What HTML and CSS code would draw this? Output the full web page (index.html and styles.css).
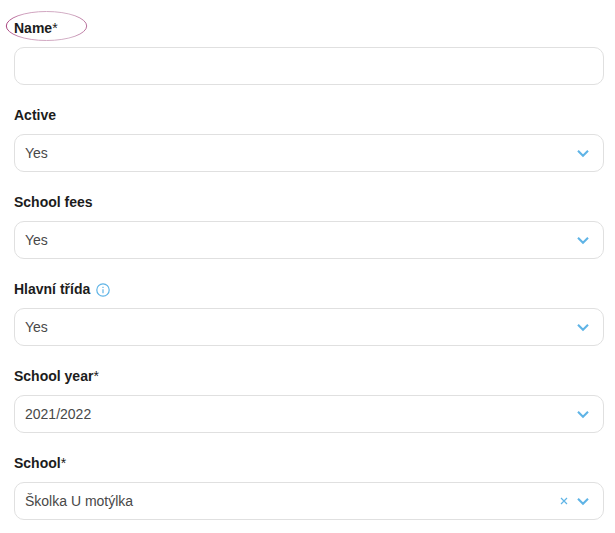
FILE: index.html
```html
<!DOCTYPE html>
<html lang="en">
<head>
<meta charset="utf-8">
<title>Class</title>
<link rel="stylesheet" href="styles.css">
</head>
<body>
<form class="form">
  <div class="field">
    <div class="label">Name<span class="req">*</span>
      <svg class="mark" width="84" height="34" viewBox="0 0 84 34">
        <defs>
          <linearGradient id="ink" x1="0" x2="1" y1="0" y2="0">
            <stop offset="0" stop-color="#a8437f"/>
            <stop offset="0.2" stop-color="#cfa0bd"/>
            <stop offset="0.8" stop-color="#d3b0c6"/>
            <stop offset="1" stop-color="#b8709c"/>
          </linearGradient>
        </defs>
        <ellipse cx="41.5" cy="17" rx="40.2" ry="14.5"/>
      </svg>
    </div>
    <div class="control"></div>
  </div>
  <div class="field">
    <div class="label">Active</div>
    <div class="control"><span class="value">Yes</span><svg class="chevron" viewBox="0 0 12 8"><path d="M1 1.8l5 5 5-5"/></svg></div>
  </div>
  <div class="field">
    <div class="label">School fees</div>
    <div class="control"><span class="value">Yes</span><svg class="chevron" viewBox="0 0 12 8"><path d="M1 1.8l5 5 5-5"/></svg></div>
  </div>
  <div class="field">
    <div class="label">Hlavní třída<svg class="info" viewBox="0 0 14 14"><circle cx="7" cy="7" r="6.2"/><path d="M7 6.2v4M7 3.7v1.3"/></svg></div>
    <div class="control"><span class="value">Yes</span><svg class="chevron" viewBox="0 0 12 8"><path d="M1 1.8l5 5 5-5"/></svg></div>
  </div>
  <div class="field">
    <div class="label">School year<span class="req">*</span></div>
    <div class="control"><span class="value">2021/2022</span><svg class="chevron" viewBox="0 0 12 8"><path d="M1 1.8l5 5 5-5"/></svg></div>
  </div>
  <div class="field">
    <div class="label">School<span class="req">*</span></div>
    <div class="control"><span class="value">Školka U motýlka</span><svg class="clear" viewBox="0 0 8 8"><path d="M1 1l6 6M7 1L1 7"/></svg><svg class="chevron" viewBox="0 0 12 8"><path d="M1 1.8l5 5 5-5"/></svg></div>
  </div>
</form>
</body>
</html>
```

FILE: styles.css
```css
* { box-sizing: border-box; }
body {
  margin: 0;
  background: #fff;
  font: 14px/20px "Liberation Sans", Arial, sans-serif;
  color: #484848;
}
.form { padding: 18px 11px 0 14px; }
.field { height: 87px; }
.field:last-child { height: 75px; }
.label {
  position: relative;
  display: flex;
  align-items: center;
  height: 20px;
  margin-bottom: 9px;
  font-weight: bold;
  color: #1c1c1c;
}
.req { font-weight: normal; }
.mark {
  position: absolute;
  left: -9px;
  top: -9px;
  fill: none;
  stroke: url(#ink);
  stroke-width: 1;
}
.control {
  display: flex;
  align-items: center;
  height: 38px;
  padding: 0 14px 0 10px;
  border: 1px solid #e0e0e0;
  border-radius: 10px;
}
.value { flex: 1; }
.chevron, .clear, .info { fill: none; stroke: #5fb4e6; }
.chevron { width: 12px; height: 8px; overflow: visible; stroke-width: 2.1; }
.clear { width: 8px; height: 8px; margin-right: 9px; stroke-width: 1.2; }
.info { width: 14px; height: 14px; margin: 2px 0 0 6px; stroke-width: 1.2; }
```
